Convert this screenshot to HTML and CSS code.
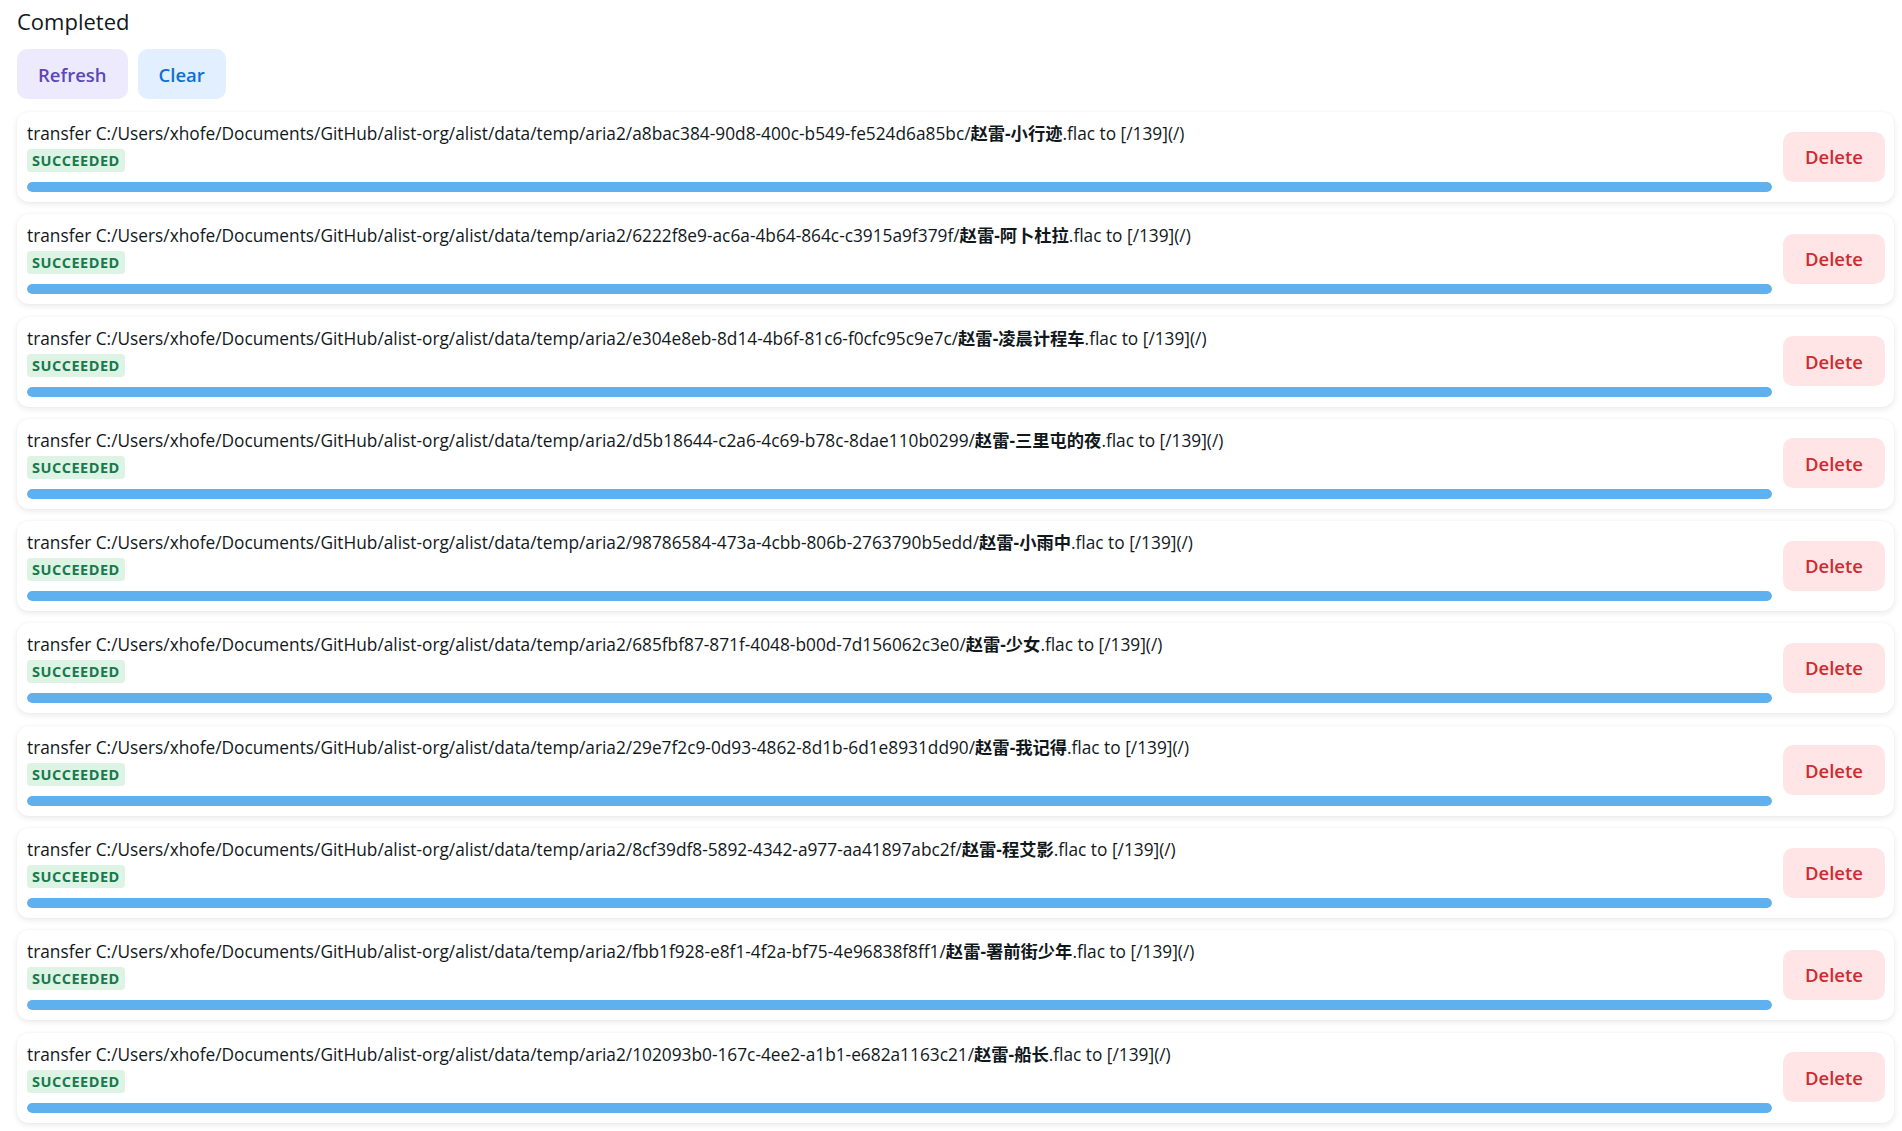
FILE: index.html
```html
<!DOCTYPE html>
<html lang="zh-CN">
<head>
<meta charset="utf-8">
<title>Completed</title>
<link rel="stylesheet" href="styles.css">
</head>
<body>
<main class="page">
  <h2 class="heading">Completed</h2>
  <div class="actions">
    <button class="btn btn-purple">Refresh</button>
    <button class="btn btn-blue">Clear</button>
  </div>
  <div class="list">
    <div class="task">
      <div class="task-info">
        <div class="task-name">transfer C:/Users/xhofe/Documents/GitHub/alist-org/alist/data/temp/aria2/a8bac384-90d8-400c-b549-fe524d6a85bc/<span class="cjk">赵雷-小行迹</span>.flac to [/139](/)</div>
        <span class="badge">SUCCEEDED</span>
        <div class="progress"><div class="progress-fill"></div></div>
      </div>
      <button class="btn btn-red">Delete</button>
    </div>
    <div class="task">
      <div class="task-info">
        <div class="task-name">transfer C:/Users/xhofe/Documents/GitHub/alist-org/alist/data/temp/aria2/6222f8e9-ac6a-4b64-864c-c3915a9f379f/<span class="cjk">赵雷-阿卜杜拉</span>.flac to [/139](/)</div>
        <span class="badge">SUCCEEDED</span>
        <div class="progress"><div class="progress-fill"></div></div>
      </div>
      <button class="btn btn-red">Delete</button>
    </div>
    <div class="task">
      <div class="task-info">
        <div class="task-name">transfer C:/Users/xhofe/Documents/GitHub/alist-org/alist/data/temp/aria2/e304e8eb-8d14-4b6f-81c6-f0cfc95c9e7c/<span class="cjk">赵雷-凌晨计程车</span>.flac to [/139](/)</div>
        <span class="badge">SUCCEEDED</span>
        <div class="progress"><div class="progress-fill"></div></div>
      </div>
      <button class="btn btn-red">Delete</button>
    </div>
    <div class="task">
      <div class="task-info">
        <div class="task-name">transfer C:/Users/xhofe/Documents/GitHub/alist-org/alist/data/temp/aria2/d5b18644-c2a6-4c69-b78c-8dae110b0299/<span class="cjk">赵雷-三里屯的夜</span>.flac to [/139](/)</div>
        <span class="badge">SUCCEEDED</span>
        <div class="progress"><div class="progress-fill"></div></div>
      </div>
      <button class="btn btn-red">Delete</button>
    </div>
    <div class="task">
      <div class="task-info">
        <div class="task-name">transfer C:/Users/xhofe/Documents/GitHub/alist-org/alist/data/temp/aria2/98786584-473a-4cbb-806b-2763790b5edd/<span class="cjk">赵雷-小雨中</span>.flac to [/139](/)</div>
        <span class="badge">SUCCEEDED</span>
        <div class="progress"><div class="progress-fill"></div></div>
      </div>
      <button class="btn btn-red">Delete</button>
    </div>
    <div class="task">
      <div class="task-info">
        <div class="task-name">transfer C:/Users/xhofe/Documents/GitHub/alist-org/alist/data/temp/aria2/685fbf87-871f-4048-b00d-7d156062c3e0/<span class="cjk">赵雷-少女</span>.flac to [/139](/)</div>
        <span class="badge">SUCCEEDED</span>
        <div class="progress"><div class="progress-fill"></div></div>
      </div>
      <button class="btn btn-red">Delete</button>
    </div>
    <div class="task">
      <div class="task-info">
        <div class="task-name">transfer C:/Users/xhofe/Documents/GitHub/alist-org/alist/data/temp/aria2/29e7f2c9-0d93-4862-8d1b-6d1e8931dd90/<span class="cjk">赵雷-我记得</span>.flac to [/139](/)</div>
        <span class="badge">SUCCEEDED</span>
        <div class="progress"><div class="progress-fill"></div></div>
      </div>
      <button class="btn btn-red">Delete</button>
    </div>
    <div class="task">
      <div class="task-info">
        <div class="task-name">transfer C:/Users/xhofe/Documents/GitHub/alist-org/alist/data/temp/aria2/8cf39df8-5892-4342-a977-aa41897abc2f/<span class="cjk">赵雷-程艾影</span>.flac to [/139](/)</div>
        <span class="badge">SUCCEEDED</span>
        <div class="progress"><div class="progress-fill"></div></div>
      </div>
      <button class="btn btn-red">Delete</button>
    </div>
    <div class="task">
      <div class="task-info">
        <div class="task-name">transfer C:/Users/xhofe/Documents/GitHub/alist-org/alist/data/temp/aria2/fbb1f928-e8f1-4f2a-bf75-4e96838f8ff1/<span class="cjk">赵雷-署前街少年</span>.flac to [/139](/)</div>
        <span class="badge">SUCCEEDED</span>
        <div class="progress"><div class="progress-fill"></div></div>
      </div>
      <button class="btn btn-red">Delete</button>
    </div>
    <div class="task">
      <div class="task-info">
        <div class="task-name">transfer C:/Users/xhofe/Documents/GitHub/alist-org/alist/data/temp/aria2/102093b0-167c-4ee2-a1b1-e682a1163c21/<span class="cjk">赵雷-船长</span>.flac to [/139](/)</div>
        <span class="badge">SUCCEEDED</span>
        <div class="progress"><div class="progress-fill"></div></div>
      </div>
      <button class="btn btn-red">Delete</button>
    </div>
  </div>
</main>
</body>
</html>
```
FILE: styles.css
```css
* { box-sizing: border-box; }
html, body {
  margin: 0;
  background: #ffffff;
}
body {
  font-family: "Open Sans", "Noto Sans CJK SC", sans-serif;
  color: #11181c;
}
.page {
  padding: 6px 8px 8px 17px;
}
.heading {
  margin: 0;
  font-size: 22px;
  line-height: 30px;
  font-weight: 500;
  color: #11181c;
}
.actions {
  display: flex;
  gap: 10px;
  margin-top: 13px;
}
.btn {
  font-family: inherit;
  border: none;
  height: 50px;
  padding: 0 21px;
  border-radius: 10px;
  font-size: 18.5px;
  font-weight: 600;
  cursor: pointer;
}
.btn-purple { background: #eeeafd; color: #5b47b8; }
.btn-blue { background: #e1effe; color: #0d6fd6; }
.btn-red { background: #ffe5e5; color: #cd2b31; flex: none; padding: 0 22px; }
.list {
  margin-top: 13px;
  display: flex;
  flex-direction: column;
  gap: 12.3px;
}
.task {
  display: flex;
  align-items: center;
  gap: 11px;
  background: #ffffff;
  border-radius: 12px;
  padding: 9px 9px 10px 10px;
  box-shadow: 0 2px 6px rgba(0, 0, 0, 0.09), 0 0 2px rgba(0, 0, 0, 0.04);
}
.task-info {
  flex: 1;
  display: flex;
  flex-direction: column;
  align-items: flex-start;
  min-width: 0;
}
.task-name {
  font-size: 17.3px;
  line-height: 26px;
  color: #11181c;
  white-space: nowrap;
}
.cjk {
  font-weight: 700;
}
.badge {
  margin-top: 2px;
  height: 23px;
  line-height: 23px;
  padding: 0 5px;
  border-radius: 4px;
  background: #ddf3e4;
  color: #18794e;
  font-size: 14.5px;
  font-weight: 700;
  letter-spacing: 0.5px;
}
.progress {
  margin-top: 10px;
  width: 100%;
  height: 10px;
  border-radius: 999px;
  background: #e6e8eb;
  overflow: hidden;
}
.progress-fill {
  width: 100%;
  height: 100%;
  background: #5eb0ef;
  border-radius: 999px;
}
```
